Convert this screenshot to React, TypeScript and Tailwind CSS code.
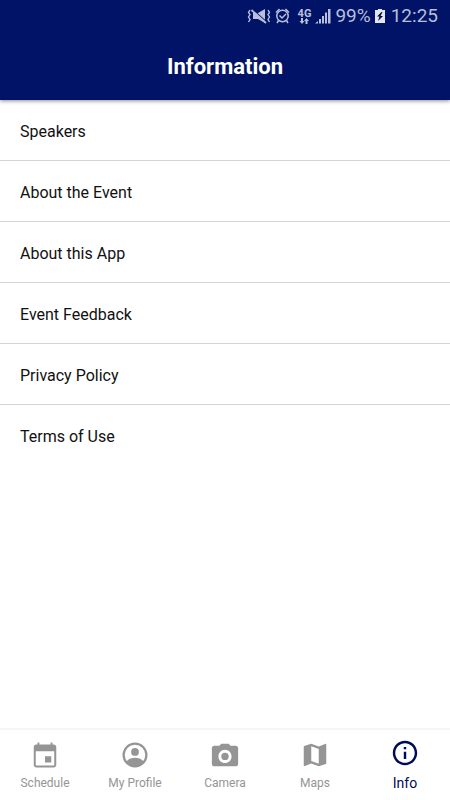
import type { ReactNode } from "react";
import { IoMdCamera, IoMdInformationCircleOutline, IoMdMap } from "react-icons/io";

function MutedIcon() {
  return (
    <svg width="24" height="16" viewBox="0 0 24 16" fill="none" stroke="currentColor" aria-hidden="true">
      <path d="M6 5h5l7-4v14l-7-4H6z" fill="currentColor" stroke="none" />
      <path d="M5.500 1.500 19.500 14" stroke="#001366" strokeWidth="1.300" />
      <path d="M4.500 2 19 15" strokeWidth="1.700" />
      <path d="M3 2 1.500 4.500 3 6.500 1.500 9 3 11.500 1.500 14M21 2l1.500 2.500L21 6.500 22.500 9 21 11.500l1.500 2.500" strokeWidth="1.400" />
    </svg>
  );
}

function AlarmIcon() {
  return (
    <svg width="15" height="16" viewBox="0 0 15 16" fill="none" stroke="currentColor" strokeWidth="1.500" aria-hidden="true">
      <circle cx="7.500" cy="8" r="5.700" />
      <path d="M1 4.500 4.500 1M14 4.500 10.500 1M3.500 12.500 2 15M11.500 12.500 13 15M4.500 7.500 7 10l4-4" />
    </svg>
  );
}

function DataArrows() {
  return (
    <svg width="10" height="6" viewBox="0 0 10 6" fill="currentColor" aria-hidden="true">
      <path d="M2 0h2v3h1.500L3 6 .5 3H2zM6.500 6h2V3H10L7.500 0 5 3h1.500z" />
    </svg>
  );
}

function SignalIcon() {
  return (
    <svg width="16" height="16" viewBox="0 0 16 16" fill="currentColor" aria-hidden="true">
      <path d="M0 15.500 3 13v2.500zM4 11h2v4.500H4zM7 8h2v7.500H7zM10 4.500h2v11h-2zM13 1h2.500v14.500H13z" />
    </svg>
  );
}

function BatteryIcon() {
  return (
    <svg width="10" height="16" viewBox="0 0 10 16" aria-hidden="true">
      <path d="M3 1h4v1h3v13H0V2h3z" fill="#e3e5f0" />
      <path d="M6.500 4 2 8.500h2.500L3 13l5-5H5.500L7.500 4z" fill="#000a33" />
    </svg>
  );
}

function CalendarIcon() {
  return (
    <svg width="30" height="30" viewBox="0 0 24 24" fill="currentColor" aria-hidden="true">
      <path d="M17 13h-5v5h5zM16.500 2v1.500h-9V2H6v1.500H5c-1.100 0-2 .9-2 2v14.500c0 1.100.9 2 2 2h14c1.100 0 2-.9 2-2V5.500c0-1.100-.9-2-2-2h-1V2zM19.400 20.400H4.600V9h14.800z" />
    </svg>
  );
}

function ProfileIcon() {
  return (
    <svg width="30" height="30" viewBox="0 0 24 24" aria-hidden="true">
      <clipPath id="profile-disc">
        <circle cx="12" cy="12" r="9" />
      </clipPath>
      <circle cx="12" cy="12" r="9.100" fill="none" stroke="currentColor" strokeWidth="1.800" />
      <circle cx="12" cy="9.500" r="3.100" fill="currentColor" />
      <path d="M5 17.300C7 15 9.500 14.200 12 14.200s5 .8 7 3.100V22H5z" fill="currentColor" clipPath="url(#profile-disc)" />
    </svg>
  );
}

const pages = ["Speakers", "About the Event", "About this App", "Event Feedback", "Privacy Policy", "Terms of Use"];

const tabs: { label: string; icon: ReactNode; active?: boolean }[] = [
  { label: "Schedule", icon: <CalendarIcon /> },
  { label: "My Profile", icon: <ProfileIcon /> },
  { label: "Camera", icon: <IoMdCamera size={30} aria-hidden="true" /> },
  { label: "Maps", icon: <IoMdMap size={30} aria-hidden="true" /> },
  { label: "Info", icon: <IoMdInformationCircleOutline size={30} aria-hidden="true" />, active: true },
];

export default function App() {
  return (
    <div className="flex min-h-screen flex-col bg-white font-[Roboto,sans-serif] text-[#111111]">
      <header className="z-10 bg-[#001366] shadow-[0_1px_4px_rgba(0,0,0,0.45)]">
        <div className="flex h-8 items-center justify-end pr-3 text-[#b9bfda]">
          <MutedIcon />
          <span className="ml-1">
            <AlarmIcon />
          </span>
          <span className="ml-2 flex flex-col items-center text-[11px] leading-[9px] font-bold">
            4G
            <DataArrows />
          </span>
          <span className="ml-1">
            <SignalIcon />
          </span>
          <span className="ml-1 text-[19px] leading-6">99%</span>
          <span className="ml-1">
            <BatteryIcon />
          </span>
          <time className="ml-1.5 text-[19px] leading-6">12:25</time>
        </div>
        <h1 className="flex h-[68px] items-center justify-center text-[22px] font-bold text-white">Information</h1>
      </header>

      <main className="flex-1">
        <ul className="divide-y divide-[#d4d4d4]">
          {pages.map((page) => (
            <li key={page}>
              <button type="button" className="block h-[60px] w-full px-5 pt-1 text-left text-base">
                {page}
              </button>
            </li>
          ))}
        </ul>
      </main>

      <nav aria-label="Main" className="grid h-[72px] grid-cols-5 border-t-2 border-[#f6f6f6]">
        {tabs.map((tab) => (
          <button
            key={tab.label}
            type="button"
            aria-current={tab.active ? "page" : undefined}
            className={
              tab.active
                ? "flex flex-col items-center gap-[5px] pt-2 text-sm text-[#000a5c]"
                : "flex flex-col items-center gap-[5px] pt-2.5 text-xs text-[#959595]"
            }
          >
            {tab.icon}
            <span>{tab.label}</span>
          </button>
        ))}
      </nav>
    </div>
  );
}
